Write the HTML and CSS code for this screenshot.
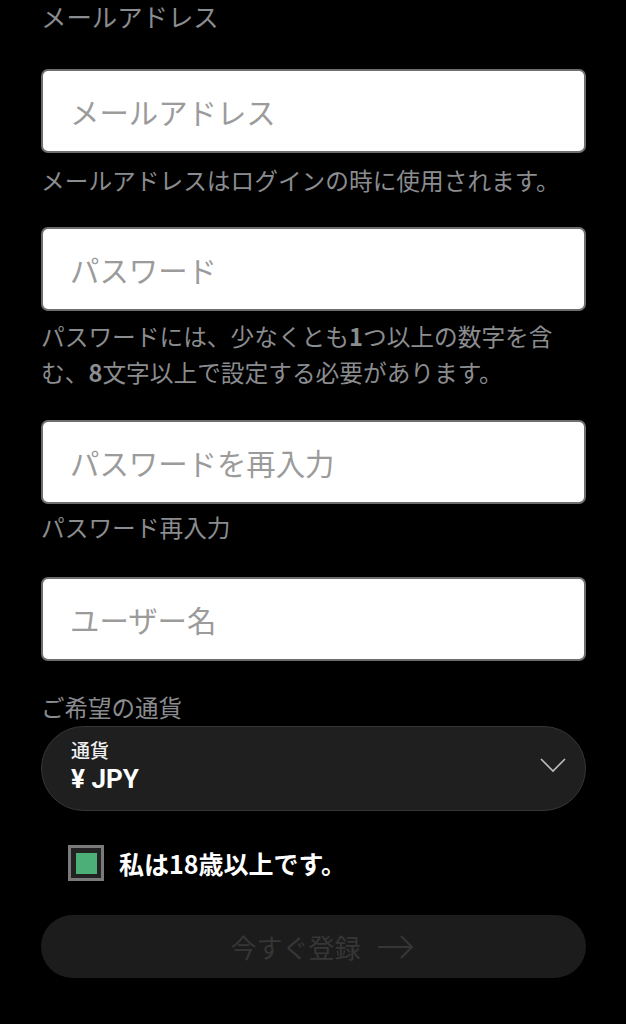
FILE: index.html
```html
<!DOCTYPE html>
<html lang="ja">
<head>
<meta charset="utf-8">
<title>登録</title>
<link rel="stylesheet" href="styles.css">
</head>
<body>
<div class="form">
  <div class="label label-top">メールアドレス</div>
  <div class="field f1"><span class="ph">メールアドレス</span></div>
  <div class="help h1">メールアドレスはログインの時に使用されます。</div>
  <div class="field f2"><span class="ph">パスワード</span></div>
  <div class="help h2">パスワードには、少なくとも<b>1</b>つ以上の数字を含<br>む、<b>8</b>文字以上で設定する必要があります。</div>
  <div class="field f3"><span class="ph">パスワードを再入力</span></div>
  <div class="help h3">パスワード再入力</div>
  <div class="field f4"><span class="ph">ユーザー名</span></div>
  <div class="label label-cur">ご希望の通貨</div>
  <div class="select">
    <div class="sel-text">
      <div class="sel-cap">通貨</div>
      <div class="sel-val">¥ JPY</div>
    </div>
    <svg class="chev" width="26" height="15" viewBox="0 0 26 15"><path d="M1 1 L13 13 L25 1" fill="none" stroke="#bdbdbd" stroke-width="1.6"/></svg>
  </div>
  <div class="check-row">
    <span class="box"><span class="tick"></span></span>
    <span class="check-label">私は18歳以上です。</span>
  </div>
  <div class="btn">
    <span class="btn-text">今すぐ登録</span>
    <svg class="arrow" width="38" height="26" viewBox="0 0 38 26"><path d="M1 13 H35 M24 2 L35 13 L24 24" fill="none" stroke="#363636" stroke-width="2"/></svg>
  </div>
</div>
</body>
</html>
```
FILE: styles.css
```css
html, body {
  margin: 0;
  padding: 0;
  background: #000;
}
body {
  font-family: "Noto Sans CJK JP", "Noto Sans", sans-serif;
  width: 626px;
  height: 1024px;
  overflow: hidden;
}
.form {
  display: flex;
  flex-direction: column;
  padding: 0 40px 0 41px;
}
.label {
  color: #8a8c8f;
  font-size: 23.5px;
  line-height: 32px;
}
.label-top {
  margin-top: 0;
  font-size: 25.4px;
}
.field {
  box-sizing: border-box;
  width: 545px;
  height: 84px;
  background: #fff;
  border: 2px solid #6e6e6e;
  border-radius: 7px;
  display: flex;
  align-items: center;
  padding-left: 27px;
}
.ph {
  color: #9b9b9b;
  font-size: 29.4px;
}
.f1 { margin-top: 37px; }
.help {
  color: #8a8c8f;
  font-size: 23.7px;
  line-height: 36px;
  white-space: nowrap;
}
.help b { font-weight: 700; }
.h1 { margin-top: 9px; }
.f2 { margin-top: 29px; }
.h2 { margin-top: 7px; }
.f3 { margin-top: 30px; }
.h3 { margin-top: 5px; }
.f4 { margin-top: 32px; }
.label-cur {
  margin-top: 28px;
  line-height: 36px;
}
.select {
  box-sizing: border-box;
  margin-top: 1px;
  width: 545px;
  height: 85px;
  background: #1f1f1f;
  border: 1.5px solid #363636;
  border-radius: 43px;
  display: flex;
  align-items: center;
  justify-content: space-between;
  padding: 0 19px 0 29px;
}
.sel-text {
  display: flex;
  flex-direction: column;
  margin-top: -7px;
}
.sel-cap {
  color: #f0f0f0;
  font-size: 19px;
  font-weight: 500;
  line-height: 28px;
}
.sel-val {
  color: #fff;
  font-family: Roboto, "Noto Sans CJK JP", sans-serif;
  font-size: 26px;
  font-weight: 700;
  line-height: 31px;
}
.chev { margin-top: -6px; }
.check-row {
  margin-top: 34px;
  display: flex;
  align-items: center;
  padding-left: 27px;
  height: 36px;
}
.box {
  box-sizing: border-box;
  width: 36px;
  height: 36px;
  border: 3px solid #7a7a7a;
  background: #222;
  display: flex;
  align-items: center;
  justify-content: center;
}
.tick {
  width: 21px;
  height: 21px;
  background: #4caf78;
}
.check-label {
  color: #fff;
  font-size: 25px;
  font-weight: 700;
  margin-left: 15px;
}
.btn {
  margin-top: 34px;
  width: 545px;
  height: 63px;
  border-radius: 32px;
  background: #1c1c1c;
  display: flex;
  align-items: center;
  justify-content: center;
  padding-left: 18px;
  box-sizing: border-box;
}
.btn-text {
  color: #363636;
  font-size: 26px;
}
.arrow { margin-left: 16px; }
```
